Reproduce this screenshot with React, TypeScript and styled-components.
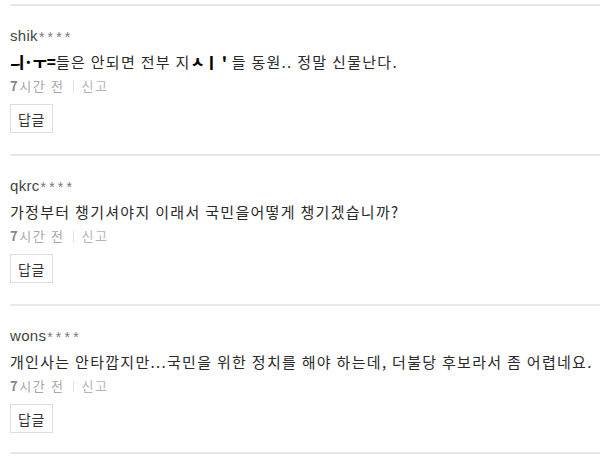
import React from "react";
import styled, { createGlobalStyle } from "styled-components";

const Global = createGlobalStyle`
  html, body { margin: 0; padding: 0; background: #fff; }
  body { font-family: "Noto Sans CJK KR", "Liberation Sans", sans-serif; }
`;

const List = styled.div`
  padding: 4px 0 0 10px;
  width: 590px;
`;

const Comment = styled.div`
  border-top: 2px solid #e8e8e8;
  padding: 20px 0 21px;
  &:last-child { border-bottom: 2px solid #e8e8e8; padding-bottom: 19px; }
`;

const User = styled.div`
  height: 20px;
  line-height: 20px;
  font-family: "Liberation Sans", Arial, sans-serif;
  font-size: 15px;
  color: #444;
  letter-spacing: 0.3px;
`;

const Stars = styled.span`
  font-size: 14px;
  color: #777;
  letter-spacing: 3.2px;
  vertical-align: -1px;
  margin-left: 1px;
`;

const Body = styled.div`
  margin-top: 4px;
  height: 24px;
  line-height: 24px;
  font-size: 15px;
  color: #2a2a2a;
  white-space: nowrap;
  letter-spacing: 1.3px;
`;

const Broken = styled.span`
  font-weight: 900;
  color: #000;
  letter-spacing: 0px;
`;

const Meta = styled.div`
  margin-top: 2px;
  height: 20px;
  line-height: 20px;
  font-size: 13px;
  color: #b4b4b4;
  letter-spacing: 1.6px;
  display: flex;
  align-items: center;
`;

const Time = styled.span`
  color: #a8a8a8;
  b { color: #888; font-weight: 700; }
`;

const Sep = styled.span`
  width: 1px;
  height: 11px;
  background: #e2e2e2;
  margin: 0 7px 0 9px;
`;

const Reply = styled.button`
  margin-top: 8px;
  display: block;
  width: 43px;
  height: 29px;
  padding: 0;
  border: 1px solid #ddd;
  background: #fff;
  font-family: "Noto Sans CJK KR", sans-serif;
  font-size: 14px;
  letter-spacing: 0.5px;
  color: #333;
  cursor: pointer;
`;

type C = { user: string; text: React.ReactNode };

const comments: C[] = [
  {
    user: "shik",
    text: (
      <>
        <Broken>ㅢ·ㅜ=</Broken>들은 안되면 전부 지<Broken>ㅅㅣ '</Broken> 들 동원.. 정말 신물난다.
      </>
    ),
  },
  { user: "qkrc", text: "가정부터 챙기셔야지 이래서 국민을어떻게 챙기겠습니까?" },
  {
    user: "wons",
    text: "개인사는 안타깝지만...국민을 위한 정치를 해야 하는데, 더불당 후보라서 좀 어렵네요.",
  },
];

export default function App() {
  return (
    <>
      <Global />
      <List>
        {comments.map((c) => (
          <Comment key={c.user}>
            <User>
              {c.user}
              <Stars>****</Stars>
            </User>
            <Body>{c.text}</Body>
            <Meta>
              <Time>
                <b>7</b>시간 전
              </Time>
              <Sep />
              <span>신고</span>
            </Meta>
            <Reply>답글</Reply>
          </Comment>
        ))}
      </List>
    </>
  );
}
